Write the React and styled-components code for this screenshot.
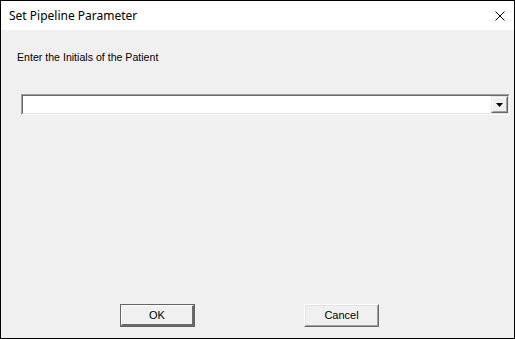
import React from "react";
import styled, { createGlobalStyle } from "styled-components";

const Global = createGlobalStyle`
  html, body { margin: 0; padding: 0; background: #f0f0f0; }
  * { box-sizing: border-box; }
`;

const Window = styled.div`
  width: 515px;
  height: 339px;
  border: 1px solid #000;
  background: #f0f0f0;
  display: flex;
  flex-direction: column;
  font-family: "Liberation Sans", Arial, sans-serif;
  font-size: 11px;
  color: #000;
`;

const TitleBar = styled.div`
  height: 29px;
  background: #fff;
  display: flex;
  align-items: center;
  justify-content: space-between;
  padding: 0 9px 0 8px;
`;

const Title = styled.span`
  font-family: "Noto Sans", "Open Sans", sans-serif;
  font-size: 12px;
  color: #000;
  margin-top: -1px;
`;

const CloseBtn = styled.div`
  width: 10px;
  height: 10px;
  display: flex;
  margin-top: 1px;
`;

const Body = styled.div`
  flex: 1;
  display: flex;
  flex-direction: column;
  padding: 21px 0 11px 20px;
`;

const Label = styled.div`
  margin-left: -4px;
  font-size: 10.6px;
  line-height: 13px;
  height: 13px;
`;

const Combo = styled.div`
  margin-top: 30px;
  width: 489px;
  height: 21px;
  border-style: solid;
  border-width: 1px;
  border-color: #a0a0a0 #ffffff #ffffff #a0a0a0;
  background: #fff;
  display: flex;
`;

const ComboInner = styled.div`
  flex: 1;
  display: flex;
  justify-content: flex-end;
  border-style: solid;
  border-width: 1px;
  border-color: #696969 #e3e3e3 #e3e3e3 #696969;
`;

const DropBtn = styled.div`
  width: 17px;
  height: 17px;
  background: #f0f0f0;
  border-style: solid;
  border-width: 1px;
  border-color: #e3e3e3 #696969 #696969 #e3e3e3;
  display: flex;
`;

const DropInner = styled.div`
  flex: 1;
  display: flex;
  align-items: center;
  justify-content: center;
  border-style: solid;
  border-width: 1px;
  border-color: #ffffff #a0a0a0 #a0a0a0 #ffffff;
`;

const Spacer = styled.div`
  flex: 1;
`;

const ButtonRow = styled.div`
  display: flex;
  gap: 109px;
  padding-left: 99px;
`;

const Button = styled.div`
  width: 75px;
  height: 23px;
  display: flex;
  border-style: solid;
  border-width: 1px;
  border-color: ${(p) => (p.$default ? "#646464" : "#ffffff #696969 #696969 #ffffff")};
  background: #f0f0f0;
`;

const ButtonFace = styled.div`
  flex: 1;
  display: flex;
  align-items: center;
  justify-content: center;
  border-style: solid;
  border-width: ${(p) => (p.$default ? "1px 2px 2px 1px" : "1px")};
  border-color: ${(p) =>
    p.$default ? "#ffffff #696969 #696969 #ffffff" : "#e3e3e3 #a0a0a0 #a0a0a0 #e3e3e3"};
  padding-bottom: 1px;
`;

export default function App() {
  return (
    <>
      <Global />
      <Window>
        <TitleBar>
          <Title>Set Pipeline Parameter</Title>
          <CloseBtn>
            <svg width="10" height="10" viewBox="0 0 10 10">
              <path d="M0.5 0.5 L9.5 9.5 M9.5 0.5 L0.5 9.5" stroke="#000" strokeWidth="1" fill="none" />
            </svg>
          </CloseBtn>
        </TitleBar>
        <Body>
          <Label>Enter the Initials of the Patient</Label>
          <Combo>
            <ComboInner>
              <DropBtn>
                <DropInner>
                  <svg width="7" height="4" viewBox="0 0 7 4">
                    <path d="M0 0 H7 L3.5 4 Z" fill="#000" />
                  </svg>
                </DropInner>
              </DropBtn>
            </ComboInner>
          </Combo>
          <Spacer />
          <ButtonRow>
            <Button $default>
              <ButtonFace $default>OK</ButtonFace>
            </Button>
            <Button>
              <ButtonFace>Cancel</ButtonFace>
            </Button>
          </ButtonRow>
        </Body>
      </Window>
    </>
  );
}
